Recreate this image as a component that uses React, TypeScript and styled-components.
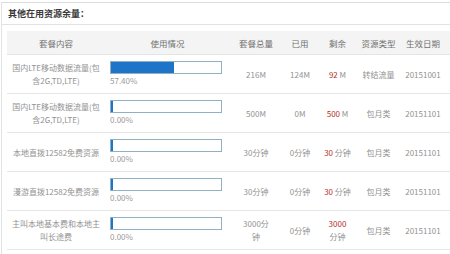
import React from "react";
import styled, { createGlobalStyle } from "styled-components";

const GlobalStyle = createGlobalStyle`
  html, body {
    margin: 0;
    padding: 0;
    background: #fff;
  }
  body {
    width: 450px;
    height: 254px;
    overflow: hidden;
    font-family: "Noto Sans CJK SC", "Noto Sans", sans-serif;
  }
`;

const Panel = styled.div`
  margin: 2px 0 0 1px;
  border-top: 1px solid #dcdcdc;
  border-left: 1px solid #e2e2e2;
  height: 260px;
  overflow: hidden;
`;

const Title = styled.div`
  height: 21px;
  line-height: 21px;
  padding-left: 6px;
  font-size: 9px;
  font-weight: bold;
  color: #3a3a3a;
  border-bottom: 1px solid #e2e2e2;
`;

const TableWrap = styled.div`
  padding: 6px 0 0 5px;
`;

const Table = styled.table`
  border-collapse: collapse;
  table-layout: fixed;
  width: 470px;
  font-size: 8px;
  color: #929292;
`;

const HeadCell = styled.th<{ w: number }>`
  width: ${(p) => p.w}px;
  height: 23px;
  padding: 0;
  background: #f4f4f4;
  border-bottom: 1px solid #e4e4e4;
  font-weight: normal;
  font-size: 8.5px;
  color: #707070;
  text-align: center;
`;

const Row = styled.tr`
  height: 39px;
  border-bottom: 1px solid #e6e6e6;
`;

const Cell = styled.td<{ pad?: number }>`
  padding: 0 ${(p) => p.pad ?? 3}px;
  text-align: center;
  vertical-align: middle;
  line-height: 13px;
  word-break: break-all;
`;

const UsageCell = styled.td`
  padding: 0 0 0 5px;
  vertical-align: middle;
`;

const Bar = styled.div`
  width: 110px;
  height: 11px;
  border: 1px solid #8fb1c2;
  background: #fff;
`;

const Fill = styled.div`
  height: 100%;
  min-width: 2px;
  background: #1e74c6;
`;

const Percent = styled.div`
  font-size: 8px;
  line-height: 12px;
  margin-top: 1px;
  color: #9a9a9a;
`;

const Red = styled.span`
  color: #b5302b;
`;

const Unit = styled.span<{ $wrap: boolean }>`
  display: ${(p) => (p.$wrap ? "block" : "inline")};
`;

type Item = {
  name: string;
  used: number;
  total: string;
  spent: string;
  left: string;
  unit: string;
  kind: string;
  date: string;
};

const items: Item[] = [
  { name: "国内LTE移动数据流量(包含2G,TD,LTE)", used: 57.4, total: "216M", spent: "124M", left: "92", unit: "M", kind: "转结流量", date: "20151001" },
  { name: "国内LTE移动数据流量(包含2G,TD,LTE)", used: 0, total: "500M", spent: "0M", left: "500", unit: "M", kind: "包月类", date: "20151101" },
  { name: "本地直拨12582免费资源", used: 0, total: "30分钟", spent: "0分钟", left: "30", unit: "分钟", kind: "包月类", date: "20151101" },
  { name: "漫游直拨12582免费资源", used: 0, total: "30分钟", spent: "0分钟", left: "30", unit: "分钟", kind: "包月类", date: "20151101" },
  { name: "主叫本地基本费和本地主叫长途费", used: 0, total: "3000分钟", spent: "0分钟", left: "3000", unit: "分钟", kind: "包月类", date: "20151101" },
];

const columns: [string, number][] = [
  ["套餐内容", 98],
  ["使用情况", 125],
  ["套餐总量", 52],
  ["已用", 36],
  ["剩余", 39],
  ["资源类型", 43],
  ["生效日期", 46],
  ["", 31],
];

export default function App() {
  return (
    <>
      <GlobalStyle />
      <Panel>
        <Title>其他在用资源余量：</Title>
        <TableWrap>
          <Table>
            <thead>
              <tr>
                {columns.map(([label, w], i) => (
                  <HeadCell key={i} w={w}>
                    {label}
                  </HeadCell>
                ))}
              </tr>
            </thead>
            <tbody>
              {items.map((item, i) => {
                // long remainders push the unit to its own line
                const wrap = item.left.length + item.unit.length > 5;
                return (
                  <Row key={i}>
                    <Cell pad={4}>{item.name}</Cell>
                    <UsageCell>
                      <Bar>
                        <Fill style={{ width: `${item.used}%` }} />
                      </Bar>
                      <Percent>{item.used.toFixed(2)}%</Percent>
                    </UsageCell>
                    <Cell pad={11}>{item.total}</Cell>
                    <Cell>{item.spent}</Cell>
                    <Cell pad={2}>
                      <Red>{item.left}</Red> <Unit $wrap={wrap}>{item.unit}</Unit>
                    </Cell>
                    <Cell>{item.kind}</Cell>
                    <Cell>{item.date}</Cell>
                    <Cell />
                  </Row>
                );
              })}
            </tbody>
          </Table>
        </TableWrap>
      </Panel>
    </>
  );
}
